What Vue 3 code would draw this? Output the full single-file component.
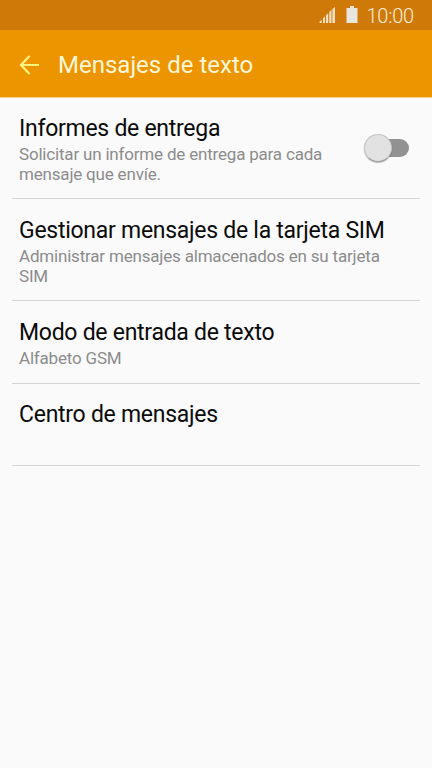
<script setup>
const items = [
  { title: 'Informes de entrega', lines: ['Solicitar un informe de entrega para cada', 'mensaje que envíe.'], toggle: true },
  { title: 'Gestionar mensajes de la tarjeta SIM', lines: ['Administrar mensajes almacenados en su tarjeta', 'SIM'] },
  { title: 'Modo de entrada de texto', lines: ['Alfabeto GSM'] },
  { title: 'Centro de mensajes', lines: [''] },
]
</script>

<template>
  <div class="screen">
    <div class="status">
      <svg class="signal" width="18" height="18" viewBox="0 0 18 18">
        <path d="M0.5 17V15.8L2.7 13.7V17zM4 17V12.3L6 10.2V17zM7 17V9.3L9.2 7.2V17zM10.3 17V6L12.5 3.8V17zM13.4 17V3L16 1V17z" fill="#f3dfc2" />
      </svg>
      <svg class="battery" width="12" height="18" viewBox="0 0 12 18">
        <path d="M4 0h4v2h3.5v15H0.5V2H4z" fill="#e9e5df" />
      </svg>
      <span class="clock">10:00</span>
    </div>
    <header class="bar">
      <svg class="back" width="20" height="20" viewBox="0 0 20 20">
        <path d="M10.5 1L2 10L10.5 19M2 10H20" fill="none" stroke="#fff47c" stroke-width="2.2" />
      </svg>
      <h1>Mensajes de texto</h1>
    </header>
    <main>
      <section v-for="item in items" :key="item.title" class="row">
        <div class="text">
          <h2>{{ item.title }}</h2>
          <p v-for="line in item.lines" :key="line">{{ line }}</p>
        </div>
        <div v-if="item.toggle" class="switch"><span class="knob"></span></div>
      </section>
    </main>
  </div>
</template>

<style>
body { margin: 0; background: #fafafa; }
</style>
<style scoped>
.screen { width: 432px; height: 768px; background: #fafafa; font-family: Roboto, sans-serif; overflow: hidden; }
.status { height: 30px; background: #cf7a08; display: flex; align-items: center; justify-content: flex-end; padding-right: 18px; box-sizing: border-box; }
.signal { margin-right: 9px; }
.battery { margin-right: 8px; }
.clock { color: #fbeedd; font-size: 20px; line-height: 30px; font-weight: 300; letter-spacing: -0.2px; padding-top: 2px; }
.bar { height: 68px; background: #ec9500; display: flex; align-items: center; padding: 2px 0 0 19px; box-sizing: border-box; border-bottom: 1px solid #f0cf8c; }
.back { margin-right: 19px; }
h1 { margin: 0; font-size: 24px; font-weight: 400; color: #fff7d8; white-space: nowrap; }
main { padding: 0 12px; }
.row { display: flex; justify-content: space-between; padding: 18px 11px 14px 7px; border-bottom: 1px solid #d4d4d4; }
.row:first-child { padding-top: 17px; }
.row:nth-child(3) { padding-bottom: 14.5px; }
.row:nth-child(4) { padding-top: 17px; padding-bottom: 14.5px; }
h2 { margin: 0 0 2px; font-size: 23px; line-height: 28px; font-weight: 400; letter-spacing: -0.27px; color: #0a0a0a; white-space: nowrap; }
p { margin: 0; font-size: 17px; line-height: 19.5px; min-height: 19.5px; letter-spacing: -0.19px; color: #8c8c8c; white-space: nowrap; }
.switch { width: 36px; height: 18px; border-radius: 9px; background: #929292; margin-top: 24px; position: relative; }
.knob { position: absolute; left: -9px; top: -5px; width: 28px; height: 28px; border-radius: 50%; background: #e2e2e2; border: 1px solid #c4c4c4; border-bottom-color: #999; box-sizing: border-box; box-shadow: 0 1px 1px rgba(0, 0, 0, 0.25); }
</style>
